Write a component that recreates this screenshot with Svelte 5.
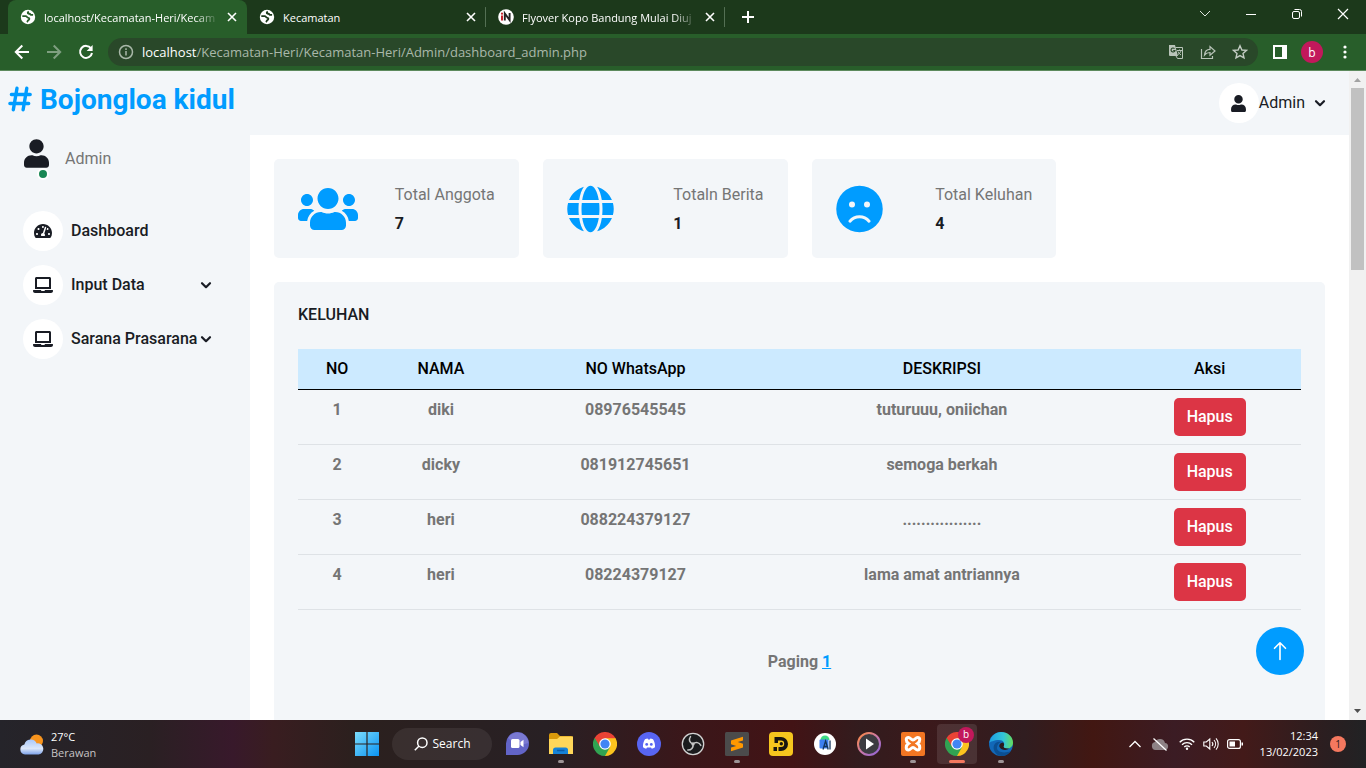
<script>
  const tabs = [
    { title: 'localhost/Kecamatan-Heri/Kecam', icon: 'globe', active: true },
    { title: 'Kecamatan', icon: 'globe', active: false },
    { title: 'Flyover Kopo Bandung Mulai Diuj', icon: 'news', active: false }
  ];
  const complaints = [
    { no: 1, name: 'diki', phone: '08976545545', text: 'tuturuuu, oniichan' },
    { no: 2, name: 'dicky', phone: '081912745651', text: 'semoga berkah' },
    { no: 3, name: 'heri', phone: '088224379127', text: '.................' },
    { no: 4, name: 'heri', phone: '08224379127', text: 'lama amat antriannya' }
  ];
  const stats = [
    { label: 'Total Anggota', value: 7, icon: 'users' },
    { label: 'Totaln Berita', value: 1, icon: 'globe' },
    { label: 'Total Keluhan', value: 4, icon: 'frown' }
  ];
  const apps = [
    { id: 'chat', label: 'Chat' },
    { id: 'files', label: 'File Explorer', running: true },
    { id: 'chrome', label: 'Chrome' },
    { id: 'discord', label: 'Discord' },
    { id: 'obs', label: 'OBS Studio' },
    { id: 'sublime', label: 'Sublime Text', running: true },
    { id: 'player', label: 'LDPlayer' },
    { id: 'studio', label: 'Android Studio' },
    { id: 'media', label: 'Media Player' },
    { id: 'xampp', label: 'XAMPP', running: true },
    { id: 'chromeb', label: 'Chrome, b', current: true },
    { id: 'edge', label: 'Edge', running: true }
  ];
</script>

{#snippet user(w, h)}
  <svg width={w} height={h} viewBox="0 0 448 512" fill="currentColor" aria-hidden="true"><path d="M224 256c70.7 0 128-57.3 128-128S294.7 0 224 0 96 57.3 96 128s57.3 128 128 128zm89.6 32h-16.7c-22.2 10.2-46.9 16-72.9 16s-50.6-5.8-72.9-16h-16.7C60.2 288 0 348.2 0 422.4V464c0 26.5 21.5 48 48 48h352c26.5 0 48-21.5 48-48v-41.6c0-74.2-60.2-134.4-134.4-134.4z" /></svg>
{/snippet}

{#snippet chevron()}
  <svg class="chev" width="12" height="12" viewBox="0 0 12 12" fill="none" stroke="currentColor" stroke-width="2.2" stroke-linecap="round" stroke-linejoin="round" aria-hidden="true"><path d="M2 4.2 6 8.2 10 4.2" /></svg>
{/snippet}

{#snippet laptop()}
  <svg width="20" height="16" viewBox="0 0 640 512" fill="currentColor" aria-hidden="true"><path d="M624 416H381.54c-.74 19.81-14.71 32-32.74 32H288c-18.69 0-33.02-17.47-32.77-32H16c-8.8 0-16 7.2-16 16v16c0 35.2 28.8 64 64 64h512c35.2 0 64-28.8 64-64v-16c0-8.8-7.2-16-16-16zM576 48c0-26.4-21.6-48-48-48H112C85.6 0 64 21.6 64 48v336h512V48zm-64 272H128V64h384v256z" /></svg>
{/snippet}

{#snippet chromeLogo()}
  <svg width="24" height="24" viewBox="0 0 24 24" aria-hidden="true">
    <path d="M12 12 1.6 6A12 12 0 0 1 22.4 6Z" fill="#e94335" />
    <path d="M12 12 22.4 6A12 12 0 0 1 12 24Z" fill="#fcc31e" />
    <path d="M12 12 12 24A12 12 0 0 1 1.6 6Z" fill="#31a352" />
    <path d="M12 6.2H22.5L17 15Z" fill="#fcc31e" />
    <path d="M17.1 14.9 12 24 9 17Z" fill="#31a352" />
    <path d="M1.6 6 7 15 12 6.2Z" fill="#e94335" />
    <path d="M1.6 6 7 15 8 17.5 2 14Z" fill="#31a352" />
    <circle cx="12" cy="12" r="5.8" fill="#fff" />
    <circle cx="12" cy="12" r="4.6" fill="#4285f4" />
  </svg>
{/snippet}

<div class="screen">
  <header class="browser">
    <div class="tabstrip">
      {#each tabs as tab}
        <div class="tab" class:active={tab.active}>
          {#if tab.icon === 'globe'}
            <svg width="16" height="16" viewBox="0 0 16 16" fill="none" stroke={tab.active ? '#285e2a' : '#1c391b'} stroke-width="1.8" aria-hidden="true">
              <circle cx="8" cy="8" r="7.2" fill="#fff" stroke="none" />
              <path d="M2.300 7.200h3.400c1.300 0 1.300 1.600 2.600 1.600 1.500 0 1.300 1.900.2 2.300-1 .4-.8 1.400-1.700 2" />
              <path d="M8.800 2.600c-1.200.5-1.500 1.600-.3 2 .9.300 1.400 0 1.900.8.500.7 1.500.4 2.700.5" />
            </svg>
          {:else}
            <svg width="16" height="16" viewBox="0 0 16 16" aria-hidden="true">
              <circle cx="8" cy="8" r="7.800" fill="#fff" />
              <path d="M4 6.500v5" stroke="#c4202b" stroke-width="2" />
              <circle cx="4" cy="4.700" r="1.100" fill="#c4202b" />
              <path d="M6.800 11.500v-7l4.800 6.500v-7" fill="none" stroke="#222" stroke-width="1.900" />
            </svg>
          {/if}
          <span class="tab-title" class:fade={tab.title.length > 20}>{tab.title}</span>
          <button class="tab-close" aria-label="Close tab">
            <svg width="10" height="10" viewBox="0 0 10 10" stroke="#fff" stroke-width="1.600"><path d="M1 1l8 8M9 1l-8 8" /></svg>
          </button>
        </div>
      {/each}
      <button class="new-tab" aria-label="New tab">
        <svg width="14" height="14" viewBox="0 0 14 14" stroke="#fff" stroke-width="2"><path d="M7 1v12M1 7h12" /></svg>
      </button>
      <div class="window-controls">
        <button aria-label="Search tabs"><svg width="12" height="12" viewBox="0 0 12 12" fill="none" stroke="#dfe6df"><path d="M1 3l5 5 5-5" /></svg></button>
        <button aria-label="Minimize"><svg width="12" height="12" viewBox="0 0 12 12" stroke="#fff"><path d="M1 6.500h10" /></svg></button>
        <button aria-label="Restore"><svg width="12" height="12" viewBox="0 0 12 12" fill="none" stroke="#fff"><rect x="1.500" y="3.500" width="7" height="7" rx="1.500" /><path d="M3.500 1.500h5a2 2 0 0 1 2 2v5" /></svg></button>
        <button aria-label="Close"><svg width="12" height="12" viewBox="0 0 12 12" stroke="#fff" stroke-width="1.200"><path d="M1 1l10 10M11 1L1 11" /></svg></button>
      </div>
    </div>

    <div class="toolbar">
      <button class="tool" aria-label="Back"><svg width="16" height="16" viewBox="0 0 16 16" fill="none" stroke="#fff" stroke-width="2"><path d="M15 8H2M8.300 1.500 1.800 8l6.500 6.500" /></svg></button>
      <button class="tool" aria-label="Forward"><svg width="16" height="16" viewBox="0 0 16 16" fill="none" stroke="#7f9f80" stroke-width="2"><path d="M1 8h13M7.700 1.500 14.200 8l-6.500 6.500" /></svg></button>
      <button class="tool" aria-label="Reload"><svg width="16" height="16" viewBox="0 0 16 16" fill="none" stroke="#fff" stroke-width="2"><path d="M13 4.400A6 6 0 1 0 14 9" /><path d="M14.600 1v6h-6z" fill="#fff" stroke="none" /></svg></button>
      <div class="address">
        <svg width="16" height="16" viewBox="0 0 16 16" fill="none" stroke="#a9b8a9" stroke-width="1.500" aria-hidden="true"><circle cx="8" cy="8" r="6.500" /><path d="M8 7v4.500M8 4.300v1.600" /></svg>
        <div class="url"><b>localhost</b>/Kecamatan-Heri/Kecamatan-Heri/Admin/dashboard_admin.php</div>
        <button class="tool" aria-label="Translate">
          <svg width="16" height="16" viewBox="0 0 16 16" fill="none"><path d="M1 1h6l3 11H2a1 1 0 0 1-1-1z" fill="#b9c4b9" /><path d="M7.500 3.500h7v11H9.500l-1.500-2.500" stroke="#b9c4b9" /><path d="M6.500 4.600A2 2 0 1 0 7 6.500H5.200" stroke="#294829" stroke-width="1.100" /><path d="M9 6.500h5M11.500 5.500v1M13 6.500c-.5 2-1.500 3-3 4M10 7.500c.6 1.500 1.700 2.500 3 3.500" stroke="#b9c4b9" /></svg>
        </button>
        <button class="tool" aria-label="Share">
          <svg width="16" height="16" viewBox="0 0 16 16" fill="none" stroke="#b9c4b9" stroke-width="1.200"><path d="M1.500 5v9.500h11V12" /><path d="M4.500 11c.4-4 2.500-5.700 5.500-5.700V2.500L15 7l-5 4.300V8.500C7.500 8.500 6 9.200 4.500 11z" /></svg>
        </button>
        <button class="tool" aria-label="Bookmark">
          <svg width="16" height="16" viewBox="0 0 16 16" fill="none" stroke="#c3ccc3" stroke-width="1.400"><path d="M8 1.800l1.900 4.200 4.500.4-3.400 3 1 4.500L8 11.600l-4 2.300 1-4.500-3.400-3 4.500-.4z" /></svg>
        </button>
      </div>
      <button class="tool panel" aria-label="Side panel"><svg width="14" height="14" viewBox="0 0 14 14"><path d="M0 0h14v14H0zM2 2v10h7V2z" fill="#fff" fill-rule="evenodd" /></svg></button>
      <button class="profile" aria-label="Profile b">b</button>
      <button class="tool more" aria-label="Menu"><svg width="4" height="14" viewBox="0 0 4 14" fill="#fff"><circle cx="2" cy="2" r="1.600" /><circle cx="2" cy="7" r="1.600" /><circle cx="2" cy="12" r="1.600" /></svg></button>
    </div>
  </header>

  <div class="viewport">
    <div class="page">
      <aside class="sidebar">
        <a class="brand" href="#top">
          <svg width="24" height="26" viewBox="0 0 24 26" fill="none" stroke="currentColor" stroke-width="3.400" stroke-linecap="round" aria-hidden="true"><path d="M9 2.200 5.300 23.800M18.800 2.200 15.100 23.800M3.400 8.500h18.800M1.900 17.500h18.800" /></svg>
          <h3>Bojongloa kidul</h3>
        </a>
        <div class="account">
          <div class="avatar">{@render user(25, 29)}<span class="online"></span></div>
          <span>Admin</span>
        </div>
        <nav>
          <a href="#dashboard"><span class="circle"><svg width="18" height="16" viewBox="0 0 576 512" fill="currentColor" aria-hidden="true"><path d="M288 32C128.940 32 0 160.940 0 320c0 52.800 14.250 102.260 39.060 144.800 5.610 9.620 16.300 15.200 27.440 15.200h443c11.140 0 21.830-5.580 27.440-15.200C561.750 422.260 576 372.800 576 320c0-159.060-128.940-288-288-288zm0 64c14.710 0 26.580 10.130 30.320 23.650-1.110 2.260-2.640 4.230-3.450 6.670l-9.220 27.670c-5.130 3.490-10.970 6.010-17.640 6.010-17.670 0-32-14.330-32-32S270.330 96 288 96zM96 384c-17.670 0-32-14.330-32-32s14.330-32 32-32 32 14.330 32 32-14.330 32-32 32zm48-160c-17.670 0-32-14.330-32-32s14.330-32 32-32 32 14.330 32 32-14.330 32-32 32zm246.770-72.410l-61.330 184C343.130 347.330 352 364.540 352 384c0 11.720-3.380 22.550-8.880 32H232.880c-5.500-9.450-8.880-20.280-8.880-32 0-33.940 26.500-61.430 59.900-63.590l61.340-184.010c4.170-12.560 17.730-19.450 30.360-15.170 12.570 4.190 19.350 17.790 15.170 30.360zm14.660 57.200l15.520-46.550c3.470-1.290 7.130-2.230 11.050-2.230 17.670 0 32 14.330 32 32s-14.330 32-32 32c-11.380-.01-20.890-6.280-26.570-15.220zM480 384c-17.670 0-32-14.330-32-32s14.330-32 32-32 32 14.330 32 32-14.330 32-32 32z" /></svg></span>Dashboard</a>
          <a href="#input"><span class="circle">{@render laptop()}</span><span class="grow">Input Data</span>{@render chevron()}</a>
          <a href="#sarana"><span class="circle">{@render laptop()}</span><span class="grow">Sarana Prasarana</span>{@render chevron()}</a>
        </nav>
      </aside>

      <div class="content">
        <div class="navbar">
          <button class="user-menu"><span class="circle">{@render user(15, 17)}</span><span>Admin</span>{@render chevron()}</button>
        </div>
        <main>
          <section class="stats">
            {#each stats as s}
              <div class="stat">
                {#if s.icon === 'users'}
                  <svg width="60" height="48" viewBox="0 0 640 512" fill="currentColor" aria-hidden="true"><path d="M96 224c35.300 0 64-28.700 64-64s-28.700-64-64-64-64 28.700-64 64 28.700 64 64 64zm448 0c35.300 0 64-28.700 64-64s-28.700-64-64-64-64 28.700-64 64 28.700 64 64 64zm32 32h-64c-17.600 0-33.500 7.100-45.100 18.600 40.300 22.100 68.900 62 75.100 109.400h66c17.700 0 32-14.300 32-32v-32c0-35.300-28.700-64-64-64zm-256 0c61.900 0 112-50.100 112-112S381.900 32 320 32 208 82.100 208 144s50.100 112 112 112zm76.800 32h-8.300c-20.800 10-43.900 16-68.500 16s-47.600-6-68.500-16h-8.300C179.600 288 128 339.600 128 403.200V432c0 26.500 21.500 48 48 48h288c26.500 0 48-21.500 48-48v-28.800c0-63.600-51.600-115.200-115.200-115.200zm-223.700-13.400C161.500 263.100 145.600 256 128 256H64c-35.300 0-64 28.700-64 64v32c0 17.700 14.300 32 32 32h65.900c6.300-47.400 34.900-87.300 75.200-109.400z" /></svg>
                {:else if s.icon === 'globe'}
                  <svg width="47" height="48" viewBox="0 0 496 512" fill="currentColor" aria-hidden="true"><path d="M336.500 160C322 70.700 287.800 8 248 8s-74 62.700-88.500 152h177zM152 256c0 22.200 1.200 43.500 3.300 64h185.300c2.100-20.500 3.300-41.800 3.300-64s-1.200-43.500-3.300-64H155.300c-2.100 20.500-3.300 41.800-3.300 64zm324.700-96c-28.600-67.900-86.500-120.400-158-141.600 24.400 33.800 41.200 84.700 50 141.600h108zM177.200 18.400C105.800 39.600 47.800 92.100 19.300 160h108c8.700-56.900 25.500-107.800 49.900-141.600zM487.400 192H372.700c2.100 21 3.300 42.500 3.300 64s-1.200 43-3.300 64h114.600c5.500-20.500 8.600-41.800 8.600-64s-3.100-43.500-8.500-64zM120 256c0-21.500 1.200-43 3.300-64H8.600C3.200 212.500 0 233.800 0 256s3.200 43.500 8.600 64h114.600c-2-21-3.200-42.500-3.200-64zm39.500 96c14.500 89.300 48.700 152 88.500 152s74-62.700 88.500-152h-177zm159.300 141.600c71.400-21.200 129.400-73.700 158-141.600h-108c-8.800 56.900-25.600 107.800-50 141.600zM19.300 352c28.600 67.900 86.500 120.400 158 141.600-24.400-33.800-41.200-84.700-50-141.600h-108z" /></svg>
                {:else}
                  <svg width="47" height="48" viewBox="0 0 496 512" aria-hidden="true"><circle cx="248" cy="256" r="248" fill="currentColor" /><circle cx="168" cy="208" r="32" fill="#f3f6f9" /><circle cx="328" cy="208" r="32" fill="#f3f6f9" /><path d="M146 386a134 134 0 0 1 204 0" fill="none" stroke="#f3f6f9" stroke-width="32" stroke-linecap="round" /></svg>
                {/if}
                <div class="stat-text"><p>{s.label}</p><h6>{s.value}</h6></div>
              </div>
            {/each}
          </section>

          <section class="card">
            <h6>KELUHAN</h6>
            <table>
              <colgroup><col class="c-no" /><col class="c-name" /><col class="c-phone" /><col class="c-text" /><col /></colgroup>
              <thead><tr><th>NO</th><th>NAMA</th><th>NO WhatsApp</th><th>DESKRIPSI</th><th>Aksi</th></tr></thead>
              <tbody>
                {#each complaints as c}
                  <tr><td>{c.no}</td><td>{c.name}</td><td>{c.phone}</td><td>{c.text}</td><td><button class="delete">Hapus</button></td></tr>
                {/each}
              </tbody>
            </table>
            <p class="paging">Paging <a href="#page-1">1</a></p>
          </section>
        </main>
      </div>
      <a class="to-top" href="#top" aria-label="Back to top"><svg width="14" height="20" viewBox="0 0 14 20" fill="none" stroke="#fff" stroke-width="1.600" stroke-linecap="round" stroke-linejoin="round"><path d="M7 18.500V2M1.500 7.300 7 1.800l5.500 5.500" /></svg></a>
    </div>
    <div class="scrollbar" aria-hidden="true">
      <svg width="17" height="17" viewBox="0 0 17 17"><path d="M5 11h7L8.500 7z" fill="#a3a3a3" /></svg>
      <div class="track"><div class="thumb"></div></div>
      <svg width="17" height="17" viewBox="0 0 17 17"><path d="M5 6h7l-3.500 4z" fill="#505050" /></svg>
    </div>
  </div>

  <footer class="taskbar">
    <div class="weather">
      <svg width="26" height="24" viewBox="0 0 26 24" aria-hidden="true">
        <defs><linearGradient id="cloud" x1="0" y1="0" x2="0" y2="1"><stop offset="0" stop-color="#a9c8fb" /><stop offset=".6" stop-color="#dbe7fa" /><stop offset="1" stop-color="#7ea3ea" /></linearGradient></defs>
        <circle cx="17.500" cy="8" r="6.500" fill="#f8941d" />
        <path d="M6 21.500a5 5 0 0 1-.6-9.900 6.500 6.500 0 0 1 12.300-1.200 5.600 5.600 0 0 1 2 11.100z" fill="url(#cloud)" />
      </svg>
      <div><div>27°C</div><div class="dim">Berawan</div></div>
    </div>

    <div class="apps">
      <button class="app" aria-label="Start">
        <svg width="24" height="24" viewBox="0 0 24 24"><defs><linearGradient id="win" gradientUnits="userSpaceOnUse" x1="0" y1="0" x2="24" y2="24"><stop offset="0" stop-color="#7cdcfb" /><stop offset="1" stop-color="#0a93f2" /></linearGradient></defs><path d="M0 0h11.400v11.400H0zM12.600 0H24v11.400H12.600zM0 12.600h11.400V24H0zM12.600 12.600H24V24H12.600z" fill="url(#win)" /></svg>
      </button>
      <button class="search">
        <svg width="14" height="14" viewBox="0 0 14 14" fill="none" stroke="#fff" stroke-width="1.500" aria-hidden="true"><circle cx="8.300" cy="5.700" r="4.700" /><path d="M5 9 .8 13.200" /></svg>
        Search
      </button>
      {#each apps as app}
        <button class="app" class:current={app.current} class:running={app.running} aria-label={app.label}>
          {#if app.id === 'chat'}
            <svg width="24" height="24" viewBox="0 0 24 24"><path d="M1 23V12A11.500 11.500 0 1 1 12.500 23z" fill="#6264c7" /><path d="M3 6A11 11 0 0 1 23.500 11L12 14z" fill="#8b87d8" opacity=".6" /><rect x="6" y="7" width="8.500" height="9" rx="1.500" fill="#fff" /><path d="M15.500 10l3-2.200v7.400l-3-2.200z" fill="#fff" /></svg>
          {:else if app.id === 'files'}
            <svg width="24" height="24" viewBox="0 0 24 24"><path d="M0 3a2 2 0 0 1 2-2h6l3 3h11a2 2 0 0 1 2 2v4H0z" fill="#d99a0b" /><path d="M0 7h8l3-2.500h13V22H0z" fill="#ffd75a" /><path d="M4 22v-4a2.500 2.500 0 0 1 2.500-2.500h10A2.500 2.500 0 0 1 19 18v4z" fill="#1683d8" /><path d="M8 18.500h7.500" stroke="#0b5ca8" stroke-width="1.500" /></svg>
          {:else if app.id === 'chrome'}
            {@render chromeLogo()}
          {:else if app.id === 'discord'}
            <svg width="24" height="24" viewBox="0 0 24 24"><circle cx="12" cy="12" r="12" fill="#5865f2" /><path d="M8 7.300c1-.5 1.900-.7 2.600-.8l.5.9h1.800l.5-.9c.7.1 1.600.3 2.600.8 1.500 2.300 2.200 4.900 2 8-1.200.9-2.200 1.300-3.200 1.500l-.8-1.300H10l-.8 1.300c-1-.2-2-.6-3.200-1.500-.2-3.100.5-5.700 2-8z" fill="#fff" /><circle cx="9.700" cy="12.400" r="1.400" fill="#5865f2" /><circle cx="14.300" cy="12.400" r="1.400" fill="#5865f2" /></svg>
          {:else if app.id === 'obs'}
            <svg width="24" height="24" viewBox="0 0 24 24"><circle cx="12" cy="12" r="10.700" fill="#1b1b1d" stroke="#d2d2d2" stroke-width="1.300" /><g fill="none" stroke="#c5c5c5" stroke-width="1.500" stroke-linecap="round"><path d="M12 12C8.500 11 7.400 7.500 9.500 4.600" /><path d="M12 12c2.700-2.500 6.300-1.600 7.800 1.400" /><path d="M12 12c.7 3.600-1.800 6.200-5.200 6" /></g><circle cx="12" cy="12" r="1.700" fill="#c5c5c5" /></svg>
          {:else if app.id === 'sublime'}
            <svg width="24" height="24" viewBox="0 0 24 24"><rect width="24" height="24" rx="1.500" fill="#4b4b4b" /><path d="M6 8.600 18 4.800v3.700L12.800 10l5.200 1.700v3.800L6 19.300v-3.700l5.200-1.700L6 12.300z" fill="#ff9800" /></svg>
          {:else if app.id === 'player'}
            <svg width="24" height="24" viewBox="0 0 24 24"><rect width="24" height="24" rx="4" fill="#f6c61e" /><path d="M5.500 11V5H12a7 7 0 0 1 0 14h-2.500v-4H12a3.200 3.200 0 0 0 0-6.400H9V11z" fill="#181510" /><circle cx="12.300" cy="11.800" r="1.700" fill="#181510" /><path d="M4.500 15h3.500v4H4.500z" fill="#181510" /></svg>
          {:else if app.id === 'studio'}
            <svg width="24" height="24" viewBox="0 0 24 24"><circle cx="12" cy="12" r="11" fill="#fff" /><path d="M7.500 8a4.500 4.500 0 0 1 9 0z" fill="#3ddc84" /><rect x="6.500" y="7.500" width="9" height="9" rx="1" fill="#3d7ff0" /><path d="M10 17.500l2.600-8.500 2.600 8.500M11 14.500h3.500M17 8.500v9" fill="none" stroke="#12345c" stroke-width="1.300" /></svg>
          {:else if app.id === 'media'}
            <svg width="24" height="24" viewBox="0 0 24 24"><defs><linearGradient id="ring" x1="0" y1="0" x2="1" y2="1"><stop offset="0" stop-color="#ff8a3c" /><stop offset=".5" stop-color="#c978a8" /><stop offset="1" stop-color="#8b62d9" /></linearGradient></defs><circle cx="12" cy="12" r="11" fill="#3b3b40" stroke="url(#ring)" stroke-width="2" /><path d="M9 6.500 17 12l-8 5.500z" fill="#fff" /></svg>
          {:else if app.id === 'xampp'}
            <svg width="24" height="24" viewBox="0 0 24 24"><rect width="24" height="24" rx="2" fill="#f37623" /><path d="M7.500 5.500c-3 0-3 4 0 6-3 2-3 6.500 0 6.500 2 0 2.500-2.500 4.500-2.500s2.500 2.500 4.500 2.500c3 0 3-4.500 0-6.500 3-2 3-6 0-6-2 0-2.500 2.500-4.500 2.500s-2.500-2.500-4.500-2.500z" fill="none" stroke="#fff" stroke-width="3" /></svg>
          {:else if app.id === 'chromeb'}
            {@render chromeLogo()}<span class="badge">b</span>
          {:else}
            <svg width="24" height="24" viewBox="0 0 24 24"><defs><linearGradient id="e1" x1="0" y1="0" x2="1" y2="0"><stop offset="0" stop-color="#1e9de0" /><stop offset=".6" stop-color="#33c6d8" /><stop offset="1" stop-color="#66dd5a" /></linearGradient></defs><circle cx="12" cy="12" r="12" fill="#1268b8" /><path d="M.3 11C1.500 4 6.500 0 12 0c7 0 12 5 12 10.500 0 4-3 6-6 6-2.500 0-4-1-3.500-2 2-3 0-6.500-4.500-6.500C5 8 1 10 .3 11z" fill="url(#e1)" /><path d="M8 16c0-3 1.500-5 4-6-5-1.500-8.500 3-7 8 1 3 4 6 7.500 6 4 0 7.500-2 9.300-5C15 22 8 20 8 16z" fill="#0b4f92" /><path d="M14 10.500c1.800 1.500.8 3.500.5 4 .2 1.500 2.500 2.500 5.500 1.800-2 2.700-8 2-9.500-1.300-.7-2 .8-4.200 3.500-4.500z" fill="#2b1a1c" /></svg>
          {/if}
        </button>
      {/each}
    </div>

    <div class="tray">
      <svg class="up" width="14" height="24" viewBox="0 0 14 24" fill="none" stroke="#fff" stroke-width="1.300" aria-hidden="true"><path d="M1.500 15 7 9.500l5.500 5.500" /></svg>
      <svg class="cloud-off" width="18" height="24" viewBox="0 0 18 24" aria-hidden="true"><path d="M4.500 18a4 4 0 0 1-.4-7.900 5.300 5.300 0 0 1 9.900.8 3.600 3.600 0 0 1 .2 7.100z" fill="#8d8285" /><path d="M2.500 6.500l13 12" stroke="#fff" stroke-width="1.300" /></svg>
      <svg width="16" height="24" viewBox="0 0 16 24" fill="none" stroke="#fff" stroke-width="1.300" aria-hidden="true"><path d="M.7 10.200a10.300 10.300 0 0 1 14.600 0M3 12.700a7 7 0 0 1 10 0M5.300 15a3.800 3.800 0 0 1 5.400 0" /><circle cx="8" cy="16.800" r="1.200" fill="#fff" stroke="none" /></svg>
      <svg width="16" height="24" viewBox="0 0 16 24" fill="none" stroke="#fff" stroke-width="1.100" aria-hidden="true"><path d="M.8 10h2.500l3.500-3v10l-3.500-3H.8zM9 10a3 3 0 0 1 0 4M11 8a6 6 0 0 1 0 8M13 6.300a8.500 8.500 0 0 1 0 11.400" /></svg>
      <svg width="16" height="24" viewBox="0 0 16 24" aria-hidden="true"><rect x=".6" y="7.600" width="12.800" height="8.800" rx="2" fill="none" stroke="#fff" stroke-width="1.200" /><rect x="2.500" y="9.500" width="5.500" height="5" fill="#fff" /><path d="M14.500 10.500h1.500v3h-1.500z" fill="#fff" /></svg>
      <div class="clock"><div>12:34</div><div>13/02/2023</div></div>
      <span class="count">1</span>
    </div>
  </footer>
</div>

<style>
  :global(body) { margin: 0; }
  * { box-sizing: border-box; }
  button { border: 0; padding: 0; background: none; color: inherit; font: inherit; cursor: pointer; }
  button, a { display: flex; align-items: center; justify-content: center; }
  a { color: inherit; text-decoration: none; }
  svg { display: block; flex: none; }
  h3, h6, p { margin: 0; }

  .screen { display: flex; flex-direction: column; height: 100vh; font-family: "Open Sans", "Noto Sans", sans-serif; font-size: 12px; overflow: hidden; }

  .browser { flex: none; background: #285e2a; color: #fff; border-bottom: 1px solid #5c8a5d; }
  .tabstrip { display: flex; height: 34px; padding-left: 8px; background: #1c391b; }
  .tab { display: flex; align-items: center; gap: 8px; flex: 0 1 239px; min-width: 0; padding: 0 10px 0 12px; border-radius: 8px 8px 0 0; }
  .tab.active { background: #285e2a; }
  .tab:not(.active) { background: linear-gradient(#547054, #547054) right center / 1px 20px no-repeat; }
  .tab-title { flex: 1; min-width: 0; overflow: hidden; white-space: nowrap; font-size: 11px; }
  .tab-title.fade { mask-image: linear-gradient(to right, #000 calc(100% - 24px), transparent); }
  .tab-close { flex: none; }
  .new-tab { width: 46px; }
  .window-controls { display: flex; margin-left: auto; padding-bottom: 6px; }
  .window-controls button { width: 46px; }

  .toolbar { display: flex; align-items: center; height: 36px; padding: 0 10px 0 6px; }
  .tool { flex: none; width: 32px; height: 28px; }
  .address { flex: 1; min-width: 0; display: flex; align-items: center; height: 28px; margin-left: 6px; padding: 0 2px 0 10px; border-radius: 14px; background: #294829; }
  .url { flex: 1; min-width: 0; margin-left: 8px; overflow: hidden; white-space: nowrap; font-size: 13px; color: #a9b8a9; }
  .url b { font-weight: 400; color: #fff; }
  .panel { margin-left: 6px; }
  .profile { flex: none; width: 22px; height: 22px; margin: 0 5px; border-radius: 50%; background: #c2185b; }
  .more { width: 22px; margin-left: 6px; }

  .viewport { flex: 1; min-height: 0; display: flex; }
  .page { position: relative; flex: 1; min-width: 0; display: flex; overflow: hidden; background: #f3f6f9; color: #757575; font: 400 16px/24px Roboto, sans-serif; }
  .sidebar { flex: none; width: 250px; }
  .brand { justify-content: flex-start; gap: 8px; height: 56px; padding-left: 8px; color: #009cff; }
  .brand h3 { padding-top: 2px; font-size: 28px; line-height: 34px; font-weight: 700; }
  .account { display: flex; align-items: center; gap: 16px; height: 64px; margin-bottom: 20px; padding-left: 24px; }
  .avatar { position: relative; height: 40px; color: #191c24; }
  .online { position: absolute; right: 0; bottom: -1px; width: 12px; height: 12px; border: 2px solid #fff; border-radius: 50%; background: #198754; }
  nav { display: flex; flex-direction: column; gap: 14px; padding: 0 38px 0 23px; color: #191c24; font-weight: 500; }
  nav a { justify-content: flex-start; gap: 8px; white-space: nowrap; }
  .grow { flex: 1; min-width: 0; }
  nav a .chev { margin-left: -8px; }
  .circle { flex: none; display: flex; align-items: center; justify-content: center; width: 40px; height: 40px; border-radius: 50%; background: #fff; }

  .content { flex: 1; min-width: 0; display: flex; flex-direction: column; }
  .navbar { flex: none; display: flex; align-items: center; justify-content: flex-end; height: 64px; padding-right: 23px; }
  .user-menu { color: #191c24; }
  .user-menu .chev { margin-left: 9px; }
  main { flex: 1; display: flex; flex-direction: column; gap: 24px; padding: 24px 24px 0; background: #fff; }
  .stats { display: grid; grid-template-columns: repeat(4, 1fr); gap: 24px; }
  .stat { display: flex; align-items: center; justify-content: space-between; padding: 24px; border-radius: 5px; background: #f3f6f9; color: #009cff; }
  .stat p { margin-bottom: 8px; color: #757575; }
  h6 { padding-bottom: 1px; font-size: 16px; line-height: 18px; font-weight: 700; color: #191c24; }
  .card { flex: 1; padding: 24px 24px 0; border-radius: 5px 5px 0 0; background: #f3f6f9; }
  .card h6 { margin-bottom: 24px; font-weight: 500; }
  table { width: 100%; table-layout: fixed; border-collapse: separate; border-spacing: 0; text-align: center; }
  .c-no { width: 7.8%; }
  .c-name { width: 12.9%; }
  .c-phone { width: 25.9%; }
  .c-text { width: 35.2%; }
  th, td { padding: 8px; vertical-align: top; font-weight: 700; }
  th { border-bottom: 1px solid #000; background: #cceaff; color: #000; font-weight: 500; }
  td { border-bottom: 1px solid #dee2e6; }
  .delete { margin: 0 auto; padding: 7px 13px; border-radius: 5px; background: #dc3545; color: #fff; font-weight: 500; }
  .paging { margin-top: 40px; text-align: center; font-weight: 700; }
  .paging a { display: inline; color: #009cff; text-decoration: underline; }
  .to-top { position: absolute; right: 45px; bottom: 45px; width: 48px; height: 48px; border-radius: 50%; background: #009cff; }

  .scrollbar { flex: none; display: flex; flex-direction: column; width: 17px; background: #f1f1f1; }
  .track { flex: 1; padding: 0 2px; }
  .thumb { height: 29.6%; background: #c1c1c1; }

  .taskbar { flex: none; display: grid; grid-template-columns: 1fr auto 1fr; height: 48px; color: #fff; line-height: 16px; background: linear-gradient(90deg, #25242a 0%, #2a2023 11%, #38192b 17%, #391d20 20%, #2b201e 26%, #282024 40%, #3a171a 50%, #421315 58%, #321c1e 63%, #3b191b 68%, #301d20 75%, #421712 80%, #3b1c24 86%, #431a19 91%, #2b1e20 97%, #212224 100%); }
  .weather { display: flex; align-items: center; gap: 6px; padding-left: 19px; padding-top: 2px; font-size: 11px; }
  .dim { color: #c6c2c4; }
  .apps { display: flex; align-items: center; padding-left: 2px; }
  .app { position: relative; width: 44px; height: 48px; }
  .running::after, .current::after { content: ""; position: absolute; bottom: 5px; left: 19px; width: 6px; height: 3px; border-radius: 2px; background: #9d9496; }
  .current::before { content: ""; position: absolute; inset: 4px 2px; border-radius: 4px; background: rgba(255, 255, 255, .1); }
  .current svg { position: relative; }
  .current::after { left: 14px; width: 16px; background: #f5785f; }
  .badge { position: absolute; top: 7px; left: 23px; width: 16px; height: 16px; border-radius: 50%; background: #c2185b; font-size: 10px; line-height: 15px; text-align: center; }
  .search { gap: 5px; width: 100px; height: 32px; margin: 0 3px; border-radius: 16px; background: rgba(255, 255, 255, .07); }
  .tray { display: flex; align-items: center; justify-content: flex-end; gap: 8px; padding-right: 20px; }
  .up { margin-right: 1px; }
  .cloud-off { margin-right: 2px; }
  .clock { margin-left: 9px; font-size: 11px; text-align: right; }
  .count { width: 16px; height: 16px; margin-left: 4px; border-radius: 50%; background: #f5785f; color: #2b1a1c; font-size: 10px; text-align: center; }
</style>
